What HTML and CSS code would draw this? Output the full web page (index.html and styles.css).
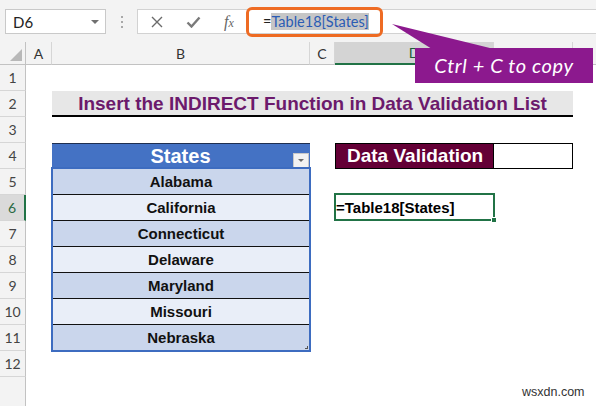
FILE: index.html
```html
<!DOCTYPE html>
<html lang="en">
<head>
<meta charset="utf-8">
<title>INDIRECT in Data Validation</title>
<link rel="stylesheet" href="styles.css">
</head>
<body>
<div class="toolbar">
  <div class="namebox"><span>D6</span><span class="nb-arrow"></span></div>
  <div class="dots"><i></i><i></i><i></i></div>
  <div class="fxbtns">
    <span class="slot">
      <svg width="12" height="12" viewBox="0 0 12 12"><path d="M1 1 L11 11 M11 1 L1 11" stroke="#6b6b6b" stroke-width="1.4" fill="none"/></svg>
    </span>
    <span class="slot">
      <svg width="15" height="12" viewBox="0 0 15 12"><path d="M1.5 6.5 L5.5 10.5 L13.5 1.5" stroke="#7a7a7a" stroke-width="2.4" fill="none"/></svg>
    </span>
    <span class="slot fx">f<span class="fx-x">x</span></span>
  </div>
  <div class="formula"><span>=</span><span class="sel">Table18[States]</span></div>
</div>

<div class="sheet">
  <div class="ch corner"><span class="tri"></span></div>
  <div class="ch">A</div>
  <div class="ch">B</div>
  <div class="ch">C</div>
  <div class="ch ch-sel">D</div>
  <div class="ch"></div>
  <div class="ch last"></div>

  <div class="rh r1">1</div>
  <div class="rh r2">2</div>
  <div class="rh r3">3</div>
  <div class="rh r4">4</div>
  <div class="rh r5">5</div>
  <div class="rh r6 rh-sel">6</div>
  <div class="rh r7">7</div>
  <div class="rh r8">8</div>
  <div class="rh r9">9</div>
  <div class="rh r10">10</div>
  <div class="rh r11">11</div>
  <div class="rh r12">12</div>
  <div class="rh r13"></div>

  <div class="title">Insert the INDIRECT Function in Data Validation List</div>

  <div class="table">
    <div class="thead">
      <span class="spacer"></span>
      <span class="th-text">States</span>
      <span class="filter"><span class="filter-tri"></span></span>
    </div>
    <div class="tbody">
      <div class="trow odd">Alabama</div>
      <div class="trow even">California</div>
      <div class="trow odd">Connecticut</div>
      <div class="trow even">Delaware</div>
      <div class="trow odd">Maryland</div>
      <div class="trow even">Missouri</div>
      <div class="trow odd lastrow">Nebraska<span class="resize"></span></div>
    </div>
  </div>

  <div class="dv-label">Data Validation</div>
  <div class="dv-value"></div>

  <div class="active">=Table18[States]<span class="handle"></span></div>
</div>

<div class="ring"></div>
<svg class="wedge" width="596" height="60" viewBox="0 0 596 60"><polygon points="392,24 432,49 494,49" fill="#8c198e"/></svg>
<div class="callout">Ctrl + C to copy</div>
<div class="watermark">wsxdn.com</div>
</body>
</html>
```

FILE: styles.css
```css
* {
  box-sizing: border-box;
  margin: 0;
  padding: 0;
}

html, body {
  width: 596px;
  height: 406px;
  overflow: hidden;
  background: #fff;
}

body {
  position: relative;
  font-family: "Lato", "Liberation Sans", sans-serif;
  color: #222;
}

/* ---------- formula bar ---------- */
.toolbar {
  height: 42px;
  background: #f3f3f3;
  display: flex;
  align-items: flex-start;
  padding-top: 9px;
}

.namebox {
  margin-left: 5px;
  width: 101px;
  height: 25px;
  background: #fff;
  border: 1px solid #c9c9c9;
  display: flex;
  align-items: center;
  justify-content: space-between;
  padding: 0 6px 0 7px;
  font-size: 15px;
  color: #222;
}

.nb-arrow {
  width: 0;
  height: 0;
  border-left: 4px solid transparent;
  border-right: 4px solid transparent;
  border-top: 4px solid #707070;
}

.dots {
  width: 31px;
  height: 25px;
  display: flex;
  flex-direction: column;
  align-items: center;
  justify-content: center;
  gap: 3px;
}

.dots i {
  display: block;
  width: 2px;
  height: 2px;
  background: #a8a8a8;
}

.fxbtns {
  width: 110px;
  height: 25px;
  background: #fff;
  border: 1px solid #d2d2d2;
  border-right: none;
  display: flex;
  align-items: center;
  padding-left: 1px;
}

.slot {
  width: 36px;
  display: flex;
  justify-content: center;
  align-items: center;
}

.fx {
  font-family: "Liberation Serif", serif;
  font-style: italic;
  font-size: 16px;
  color: #666;
}

.fx-x {
  font-size: 12px;
  position: relative;
  top: 2px;
}

.formula {
  flex: 1;
  height: 25px;
  background: #fff;
  border-top: 1px solid #d2d2d2;
  border-bottom: 1px solid #d2d2d2;
  display: flex;
  align-items: center;
  padding-left: 16px;
  font-size: 14.5px;
  color: #222;
}

.sel {
  background: #c6c6c6;
  color: #2b5cb4;
}

/* ---------- sheet ---------- */
.sheet {
  display: grid;
  grid-template-columns: 26px 26px 258px 25px 159px 79px 23px;
  grid-template-rows: 23px repeat(12, 26px) 29px;
}

.ch {
  grid-row: 1;
  background: #f3f3f3;
  border-right: 1px solid #d6d6d6;
  border-bottom: 1px solid #c2c2c2;
  display: flex;
  align-items: center;
  justify-content: center;
  font-size: 14px;
  color: #333;
}

.ch.last {
  border-right: none;
}

.corner {
  position: relative;
  border-right: 1px solid #c2c2c2;
}

.tri {
  position: absolute;
  right: 3px;
  bottom: 3px;
  width: 0;
  height: 0;
  border-left: 12px solid transparent;
  border-bottom: 12px solid #b8b8b8;
}

.ch-sel {
  background: #d4d4d4;
  border-bottom: 2px solid #217346;
  color: #1e5e3a;
}

.rh {
  grid-column: 1;
  background: #f3f3f3;
  border-right: 1px solid #c2c2c2;
  border-bottom: 1px solid #d6d6d6;
  display: flex;
  align-items: center;
  justify-content: center;
  font-size: 14px;
  color: #444;
}

.rh-sel {
  background: #dadada;
  border-right: 2px solid #217346;
  color: #2b6a45;
}

.r1 { grid-row: 2; }
.r2 { grid-row: 3; }
.r3 { grid-row: 4; }
.r4 { grid-row: 5; }
.r5 { grid-row: 6; }
.r6 { grid-row: 7; }
.r7 { grid-row: 8; }
.r8 { grid-row: 9; }
.r9 { grid-row: 10; }
.r10 { grid-row: 11; }
.r11 { grid-row: 12; }
.r12 { grid-row: 13; }
.r13 { grid-row: 14; border-bottom: none; }

.title {
  grid-row: 3;
  grid-column: 3 / 7;
  background: #e7e7e7;
  border-bottom: 2px solid #000;
  display: flex;
  align-items: center;
  justify-content: center;
  font-family: "Liberation Sans", Arial, sans-serif;
  font-weight: bold;
  font-size: 19px;
  color: #6c1a6c;
  padding-top: 1px;
}

/* ---------- table ---------- */
.table {
  grid-column: 3;
  grid-row: 5 / span 8;
  display: flex;
  flex-direction: column;
  font-family: "Liberation Sans", Arial, sans-serif;
  font-weight: bold;
}

.thead {
  height: 24px;
  background: #4472c4;
  border-top: 1px solid #1f2f50;
  display: flex;
  align-items: center;
  color: #fff;
  font-size: 20px;
  padding-right: 1px;
}

.spacer {
  width: 16px;
}

.th-text {
  flex: 1;
  text-align: center;
  padding-top: 1px;
}

.filter {
  width: 16px;
  height: 15px;
  align-self: flex-end;
  margin-bottom: -1px;
  background: #f2f2f2;
  border: 1px solid #c8c8c8;
  display: flex;
  align-items: center;
  justify-content: center;
}

.filter-tri {
  width: 0;
  height: 0;
  border-left: 3px solid transparent;
  border-right: 3px solid transparent;
  border-top: 3px solid #6a6a6a;
}

.tbody {
  margin: 0 -1px;
  border: 2px solid #3d6cc0;
  display: flex;
  flex-direction: column;
}

.trow {
  height: 26px;
  border-bottom: 1px solid #111;
  display: flex;
  align-items: center;
  justify-content: center;
  font-size: 15px;
  color: #111;
}

.trow.odd {
  background: #cad6ec;
}

.trow.even {
  background: #e9eef8;
}

.trow.lastrow {
  height: 25px;
  border-bottom: none;
  position: relative;
}

.resize {
  position: absolute;
  right: 1px;
  bottom: 1px;
  width: 3px;
  height: 3px;
  border-right: 1px solid #555;
  border-bottom: 1px solid #555;
}

/* ---------- data validation ---------- */
.dv-label {
  grid-column: 5;
  grid-row: 5;
  background: #640036;
  border: 1px solid #000;
  display: flex;
  align-items: center;
  padding-left: 11px;
  font-family: "Liberation Sans", Arial, sans-serif;
  font-weight: bold;
  font-size: 19px;
  color: #fff;
}

.dv-value {
  grid-column: 6;
  grid-row: 5;
  background: #fff;
  border: 1px solid #000;
  border-left: none;
}

.active {
  grid-column: 5;
  grid-row: 7;
  margin: -2px -1px 0 -1px;
  border: 2px solid #217346;
  position: relative;
  display: flex;
  align-items: center;
  font-family: "Liberation Sans", Arial, sans-serif;
  font-weight: bold;
  font-size: 15px;
  color: #000;
}

.handle {
  position: absolute;
  right: -4px;
  bottom: -4px;
  width: 6px;
  height: 6px;
  background: #217346;
  border: 1px solid #fff;
}

/* ---------- annotations ---------- */
.ring {
  position: absolute;
  left: 246px;
  top: 7px;
  width: 137px;
  height: 30px;
  border: 3px solid #ee6b23;
  border-radius: 6px;
}

.wedge {
  position: absolute;
  left: 0;
  top: 0;
}

.callout {
  position: absolute;
  left: 415px;
  top: 48px;
  width: 178px;
  height: 35px;
  background: #8c198e;
  color: #fff;
  display: flex;
  align-items: center;
  justify-content: center;
  font-family: "Lato", sans-serif;
  font-style: italic;
  font-size: 20px;
  letter-spacing: 0.6px;
  padding-bottom: 2px;
}

.watermark {
  position: absolute;
  left: 522px;
  top: 385px;
  font-family: "Liberation Sans", Arial, sans-serif;
  font-size: 12.5px;
  color: #333;
}
```
